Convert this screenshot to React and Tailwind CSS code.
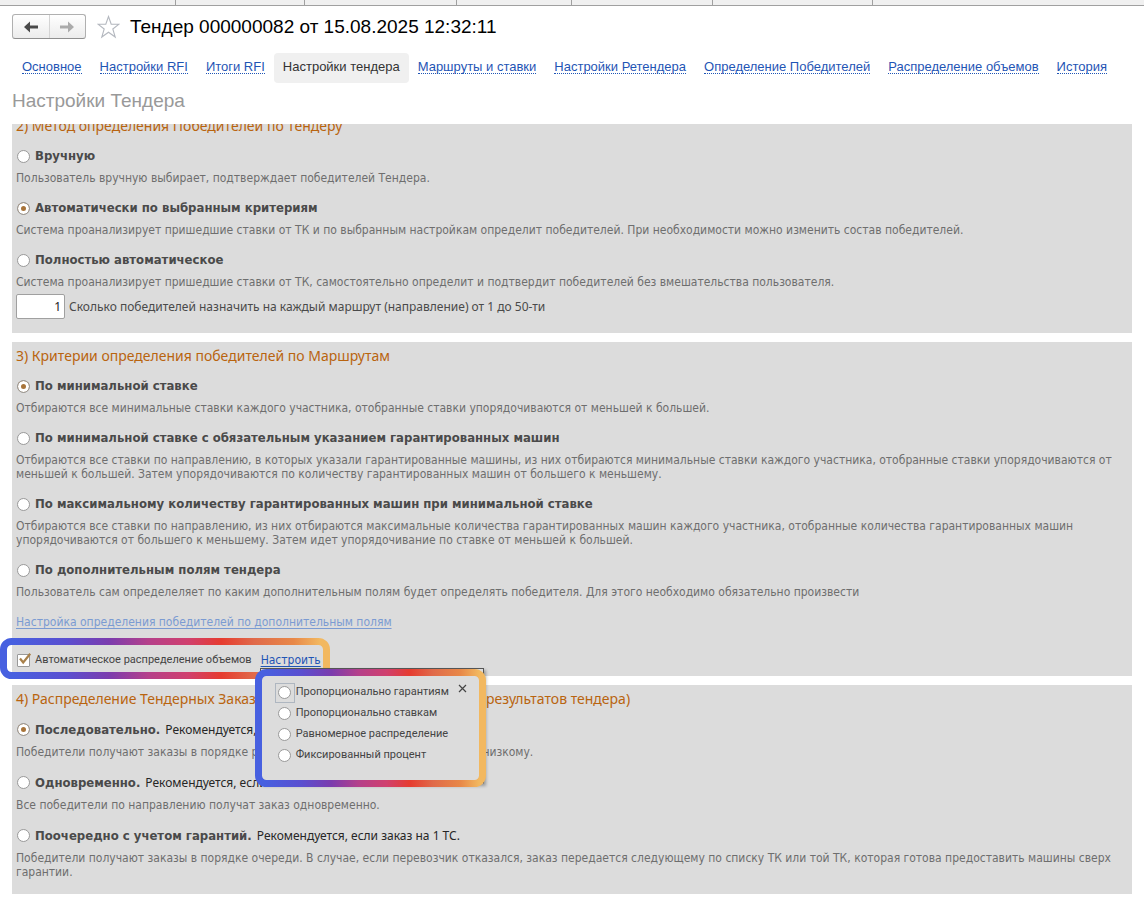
import { useState } from 'react';

const TABS = [
  'Основное',
  'Настройки RFI',
  'Итоги RFI',
  'Настройки тендера',
  'Маршруты и ставки',
  'Настройки Ретендера',
  'Определение Победителей',
  'Распределение объемов',
  'История',
];

const METHODS = [
  { id: 'manual', label: 'Вручную', text: 'Пользователь вручную выбирает, подтверждает победителей Тендера.' },
  { id: 'criteria', label: 'Автоматически по выбранным критериям', text: 'Система проанализирует пришедшие ставки от ТК и по выбранным настройкам определит победителей. При необходимости можно изменить состав победителей.' },
  { id: 'auto', label: 'Полностью автоматическое', text: 'Система проанализирует пришедшие ставки от ТК, самостоятельно определит и подтвердит победителей без вмешательства пользователя.' },
];

const CRITERIA = [
  { id: 'min', label: 'По минимальной ставке', text: 'Отбираются все минимальные ставки каждого участника, отобранные ставки упорядочиваются от меньшей к большей.' },
  { id: 'minGuaranteed', label: 'По минимальной ставке с обязательным указанием гарантированных машин', text: 'Отбираются все ставки по направлению, в которых указали гарантированные машины, из них отбираются минимальные ставки каждого участника, отобранные ставки упорядочиваются от меньшей к большей. Затем упорядочиваются по количеству гарантированных машин от большего к меньшему.' },
  { id: 'maxGuaranteed', label: 'По максимальному количеству гарантированных машин при минимальной ставке', text: 'Отбираются все ставки по направлению, из них отбираются максимальные количества гарантированных машин каждого участника, отобранные количества гарантированных машин упорядочиваются от большего к меньшему. Затем идет упорядочивание по ставке от меньшей к большей.' },
  { id: 'extra', label: 'По дополнительным полям тендера', text: 'Пользователь сам определеляет по каким дополнительным полям будет определять победителя. Для этого необходимо обязательно произвести' },
];

const ORDERS = [
  { id: 'seq', label: 'Последовательно.', hint: 'Рекомендуется, если', text: 'Победители получают заказы в порядке рейтинга, от самого высокого к самому низкому.' },
  { id: 'same', label: 'Одновременно.', hint: 'Рекомендуется, если', text: 'Все победители по направлению получат заказ одновременно.' },
  { id: 'turn', label: 'Поочередно с учетом гарантий.', hint: 'Рекомендуется, если заказ на 1 ТС.', text: 'Победители получают заказы в порядке очереди. В случае, если перевозчик отказался, заказ передается следующему по списку ТК или той ТК, которая готова предоставить машины сверх гарантии.' },
];

const SPLITS = ['Пропорционально гарантиям', 'Пропорционально ставкам', 'Равномерное распределение', 'Фиксированный процент'];

const RADIO = 'appearance-none block w-[13px] h-[13px] shrink-0 rounded-full border border-[#999] bg-white checked:bg-[#a8743a] checked:shadow-[inset_0_0_0_3px_white]';

function Heading({ children }) {
  return <h2 className="h-5 font-['Noto_Sans',sans-serif] text-sm leading-5 text-[#b9640f] whitespace-nowrap">{children}</h2>;
}

function Option({ name, option, checked, onChange }) {
  return (
    <div>
      <label className={`flex items-center gap-[5px] pl-px ${option.hint ? 'h-[21px]' : 'h-5'}`}>
        <input type="radio" name={name} checked={checked} onChange={onChange} className={RADIO} />
        <b className="text-[13px] leading-5 text-[#4a4a4a] whitespace-nowrap">{option.label}</b>
        {option.hint && <span className="font-['Noto_Sans',sans-serif] text-xs leading-5 text-[#262626] whitespace-nowrap">{option.hint}</span>}
      </label>
      <p className="mt-[5px] text-xs leading-[14px] text-[#6e6e6e]">{option.text}</p>
    </div>
  );
}

function OptionList({ name, options, initial }) {
  const [value, setValue] = useState(initial);
  return (
    <div className="mt-[10px] flex flex-col gap-[13px]">
      {options.map((o) => (
        <Option key={o.id} name={name} option={o} checked={value === o.id} onChange={() => setValue(o.id)} />
      ))}
    </div>
  );
}

// Rainbow outline drawn round a highlighted area
function Frame({ id, width, height, className }) {
  return (
    <svg width={width} height={height} className={`absolute pointer-events-none max-w-none ${className}`} fill="none">
      <defs>
        <linearGradient id={id} gradientUnits="userSpaceOnUse" x1="0" y1="0" x2={width} y2="0">
          <stop offset="0.04" stopColor="#4760e0" />
          <stop offset="0.2" stopColor="#5a4fd0" />
          <stop offset="0.33" stopColor="#7b3cae" />
          <stop offset="0.45" stopColor="#b5408a" />
          <stop offset="0.57" stopColor="#d0406e" />
          <stop offset="0.67" stopColor="#e63c30" />
          <stop offset="0.77" stopColor="#e06a4a" />
          <stop offset="0.89" stopColor="#e88848" />
          <stop offset="0.97" stopColor="#f2b860" />
        </linearGradient>
      </defs>
      <rect x="3.5" y="3.5" width={width - 7} height={height - 7} rx="8" stroke={`url(#${id})`} strokeWidth="7" />
    </svg>
  );
}

function SplitPopup({ onClose }) {
  const [split, setSplit] = useState('');
  return (
    <div className="absolute left-[-1px] top-[18px] z-10 w-[224px] h-[116px] border border-[#555] border-b-[#bbb] bg-[#dcdcdc] shadow-[2px_2px_3px_rgba(0,0,0,0.3)]">
      <div className="flex flex-col pl-[14px] pt-[13px]">
        {SPLITS.map((s, i) => (
          <label key={s} className="flex h-[21px] items-center gap-px font-[Roboto,sans-serif] text-[11px] text-[#444] whitespace-nowrap">
            <span className={`flex h-5 w-5 items-center justify-center border ${i === 0 ? 'border-[#aeb6c0]' : 'border-transparent'}`}>
              <input type="radio" name="split" checked={split === s} onChange={() => setSplit(s)} className={RADIO} />
            </span>
            {s}
          </label>
        ))}
      </div>
      <button type="button" aria-label="Закрыть" onClick={onClose} className="absolute right-4 top-[15px]">
        <svg width="9" height="9" viewBox="0 0 9 9" stroke="#444" strokeWidth="1.2"><path d="M1 1l7 7M8 1l-7 7" /></svg>
      </button>
      <Frame id="popupFrame" width={231} height={118} className="left-[-6px] top-0" />
    </div>
  );
}

export default function App() {
  const [auto, setAuto] = useState(true);
  const [open, setOpen] = useState(true);
  const [winners, setWinners] = useState('1');

  return (
    <div className="bg-white pb-[7px] font-['DejaVu_Sans_Condensed','DejaVu_Sans',sans-serif]">
      {/* bottom edge of the window tabs */}
      <div className="flex h-[6px] border-b border-[#a0a0a0] bg-[#f0f0f0]">
        <div className="w-[176px] border-r border-[#a0a0a0]" />
        <div className="w-[129px] border-r border-[#a0a0a0]" />
        <div className="w-[152px] border-r border-[#a0a0a0]" />
        <div className="w-[115px] border-r border-[#a0a0a0]" />
        <div className="w-[141px] border-r border-[#a0a0a0]" />
        <div className="w-[160px] border-r border-[#a0a0a0]" />
      </div>

      <header className="px-3 font-['Liberation_Sans',Arial,sans-serif]">
        <div className="mt-2 flex h-[25px] items-center">
          <div className="flex h-[25px] w-[74px] rounded-[3px] border border-[#b0b0b0] border-b-[#8f8f8f] bg-linear-to-b from-white to-[#ececec]">
            <button type="button" aria-label="Назад" className="flex flex-1 items-center justify-center border-r border-[#d4d4d4]">
              <svg width="14" height="12" viewBox="0 0 14 12"><path d="M0 6L6 .5V4.500H14V7.500H6V11.500Z" fill="#4a4a4a" /></svg>
            </button>
            <button type="button" aria-label="Вперед" className="flex flex-1 items-center justify-center">
              <svg width="14" height="12" viewBox="0 0 14 12"><path d="M14 6L8 .5V4.500H0V7.500H8V11.500Z" fill="#ababab" /></svg>
            </button>
          </div>
          <button type="button" aria-label="В избранное" className="ml-[11px]">
            <svg width="23" height="24" viewBox="0 0 23 24" fill="none" stroke="#b4b8bf" strokeWidth="1.1">
              <path d="M11.500 1.500L14.200 9.200H22L15.800 14L18.200 22L11.500 17.200L4.800 22L7.200 14L1 9.200H8.800Z" />
            </svg>
          </button>
          <h1 className="ml-[10px] text-[19px] leading-6 text-black">Тендер 000000082 от 15.08.2025 12:32:11</h1>
        </div>

        <nav className="mt-[14px] flex h-[30px] items-stretch pl-px text-[13px]">
          {TABS.map((tab) => (
            tab === 'Настройки тендера' ? (
              <a key={tab} href="#" aria-current="page" className="flex items-center rounded bg-[#f0f0f0] px-[9px] pb-[3px] text-[#333] whitespace-nowrap">{tab}</a>
            ) : (
              <a key={tab} href="#" className="flex items-center px-[9px] pb-[3px] text-[#1f55b5] whitespace-nowrap">
                <span className="border-b border-dotted border-[#1f55b5] leading-[13px]">{tab}</span>
              </a>
            )
          ))}
        </nav>

        <div className="mt-[6px] h-6 text-[19px] leading-6 text-[#999]">Настройки Тендера</div>
      </header>

      <main className="mx-3 mt-[11px] flex flex-col gap-[9px]">
        <section className="overflow-hidden bg-[#dcdcdc] px-1 pb-[14px]">
          <div className="-mt-2">
            <Heading>2) Метод определения Победителей по Тендеру</Heading>
          </div>
          <OptionList name="method" options={METHODS} initial="criteria" />
          <label className="mt-[5px] flex items-center gap-1 font-['Noto_Sans',sans-serif] text-xs text-[#4a4a4a]">
            <input
              type="text"
              value={winners}
              onChange={(e) => setWinners(e.target.value)}
              className="h-[25px] w-[49px] rounded-[2px] border border-[#a0a0a0] bg-white px-[3px] text-right text-xs text-[#222]"
            />
            Сколько победителей назначить на каждый маршрут (направление) от 1 до 50-ти
          </label>
        </section>

        <section className="bg-[#dcdcdc] px-1 pb-[6px] pt-1">
          <Heading>3) Критерии определения победителей по Маршрутам</Heading>
          <OptionList name="criteria" options={CRITERIA} initial="min" />
          <a href="#" className="mt-4 block w-fit text-xs leading-[14px] text-[#7b9bd2] underline underline-offset-2">Настройка определения победителей по дополнительным полям</a>
          <div className="relative mt-[21px] flex h-5 w-fit items-center">
            <Frame id="rowFrame" width={330} height={41} className="-left-4 -top-3" />
            <label className="flex items-center gap-[5px] pl-px font-[Roboto,sans-serif] text-[11px] text-[#444] whitespace-nowrap">
              <span className="relative block h-[13px] w-[13px]">
                <input type="checkbox" checked={auto} onChange={(e) => setAuto(e.target.checked)} className="block h-[13px] w-[13px] appearance-none rounded-[1px] border border-[#999] bg-white" />
                {auto && (
                  <svg width="15" height="13" viewBox="0 0 15 13" className="pointer-events-none absolute left-0 -top-px" fill="none" stroke="#a8804a" strokeWidth="2.2">
                    <path d="M3 5.500L6.200 9.500L13.200 .8" />
                  </svg>
                )}
              </span>
              Автоматическое распределение объемов
            </label>
            <div className="relative ml-[9px]">
              <button type="button" onClick={() => setOpen(!open)} className="block text-xs leading-5 text-[#1f55b5] underline underline-offset-2">Настроить</button>
              {open && <SplitPopup onClose={() => setOpen(false)} />}
            </div>
          </div>
        </section>

        <section className="bg-[#dcdcdc] px-1 pb-[15px] pt-1">
          <Heading>4) Распределение Тендерных Заказов (порядок сдачи на основании&nbsp; результатов тендера)</Heading>
          <OptionList name="order" options={ORDERS} initial="seq" />
        </section>
      </main>
    </div>
  );
}
